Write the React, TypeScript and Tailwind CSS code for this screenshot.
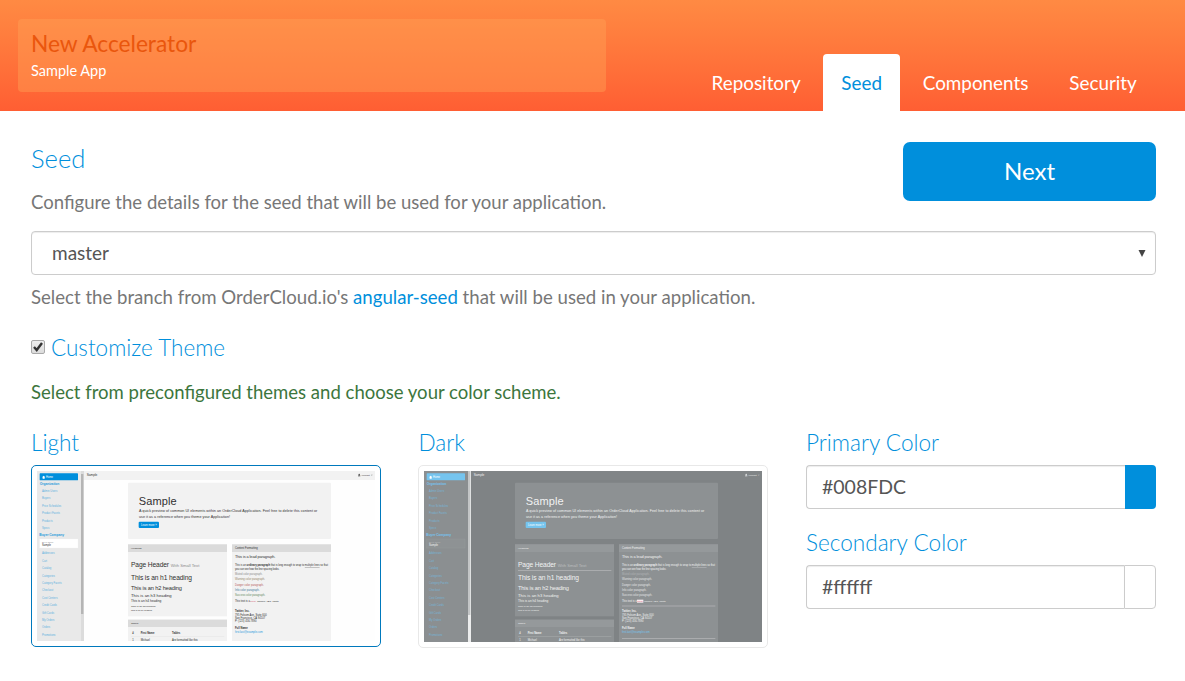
import type { ReactNode } from "react";

type Palette = {
  page: string;
  side: string;
  bar: string;
  panel: string;
  panelHead: string;
  text: string;
  muted: string;
  link: string;
  heading: string;
  button: string;
  current: string;
  currentBorder: string;
  track: string;
  thumb: string;
  rule: string;
  colors: string[];
};

const light: Palette = {
  page: "#fefefe",
  side: "#e9e9e9",
  bar: "#f2f2f2",
  panel: "#f2f2f2",
  panelHead: "#dbdbdb",
  text: "#303030",
  muted: "#8a8a8a",
  link: "#62b1e0",
  heading: "#2c9bdc",
  button: "#008fdc",
  current: "#ffffff",
  currentBorder: "#f4f4f4",
  track: "#dcdcdc",
  thumb: "#b5b5b5",
  rule: "#dcdcdc",
  colors: ["#8c8c8c", "#96866a", "#b8605e", "#44799b", "#64895f"],
};

const dark: Palette = {
  page: "#7f8385",
  side: "#8b8f91",
  bar: "#818587",
  panel: "#8d9193",
  panelHead: "#95999b",
  text: "#f1f2f2",
  muted: "#bcbebf",
  link: "#78b5d6",
  heading: "#76c3ec",
  button: "#75c4ee",
  current: "#8e9294",
  currentBorder: "#989c9e",
  track: "#eceded",
  thumb: "#c3c5c6",
  rule: "#b9bbbc",
  colors: ["#b0b3b4", "#e3e4e4", "#e3e4e4", "#e3e4e4", "#e3e4e4"],
};

const organization = ["Admin Users", "Buyers", "Price Schedules", "Product Facets", "Products", "Specs"];
const company = [
  "Addresses",
  "Cart",
  "Catalog",
  "Categories",
  "Category Facets",
  "Checkout",
  "Cost Centers",
  "Credit Cards",
  "Gift Cards",
  "My Orders",
  "Orders",
  "Promotions",
];
const samples = ["Muted", "Warning", "Danger", "Info", "Success"];

function ThemePreview({ c, isDark, height }: { c: Palette; isDark?: boolean; height: number }) {
  return (
    <svg
      viewBox={`36 33 1014 ${height * 3}`}
      width={338}
      height={height}
      className="block font-['Liberation_Sans',sans-serif]"
      fill={c.text}
    >
      <rect x="36" y="33" width="1014" height="520" fill={c.page} />
      <rect x="176" y="33" width="880" height="27" fill={c.bar} />
      <rect x="36" y="33" width="132" height="520" fill={c.side} />
      <rect x="168" y="33" width="9" height="520" fill={c.track} />
      <rect x="168" y={isDark ? 33 : 42} width="7" height={isDark ? 432 : 420} fill={c.thumb} />
      <rect x="44" y="40" width="115" height="21" rx="2" fill={c.button} />
      <path d="M51 52l5-5 5 5h-2v4h-6v-4z" fill="#fff" />
      <text x="63" y="54" fontSize="8" fill="#fff">Home</text>
      <text x="44" y="75" fontSize="10" fontWeight="700" fill={c.heading} textLength="59">Organization</text>
      {organization.map((name, i) => (
        <text key={name} x="51" y={96 + i * 22.2} fontSize="8" fill={c.link}>{name}</text>
      ))}
      <text x="43" y="229" fontSize="10" fontWeight="700" fill={c.heading} textLength="74">Buyer Company</text>
      <rect x="44" y="237" width="115" height="27" fill={c.current} stroke={c.currentBorder} />
      <text x="51" y="248" fontSize="6" fill={c.muted}>Buyer Scope</text>
      <text x="51" y="259" fontSize="8">Sample</text>
      {company.map((name, i) => (
        <text key={name} x="51" y={283 + i * 22.2} fontSize="8" fill={c.link}>{name}</text>
      ))}

      <text x="185" y="48" fontSize="9.5">Sample</text>
      <circle cx="1002.500" cy="43.500" r="2" />
      <path d="M999 49v-2q3.500-3 7 0v2z" />
      <text x="1007" y="48" fontSize="7.500">Account</text>
      <path d="M1038 44h5l-2.500 3z" fill={c.muted} />

      <rect x="309" y="68" width="609" height="169" rx="3" fill={c.panel} />
      <text x="341" y="134" fontSize="33" textLength="114">Sample</text>
      <text x="342" y="157" fontSize="11" textLength="535">
        A quick preview of common UI elements within an OrderCloud Application. Feel free to delete this content or
      </text>
      <text x="342" y="173" fontSize="11" textLength="273">
        use it as a reference when you theme your Application!
      </text>
      <rect x="341" y="185" width="61" height="19" rx="3" fill={c.button} />
      <text x="348" y="197" fontSize="8" fill="#fff">Learn more »</text>

      <rect x="309" y="253" width="297" height="216" fill={c.panel} />
      <rect x="309" y="253" width="297" height="23" fill={c.panelHead} />
      <text x="318" y="267" fontSize="7.500">Headings</text>
      <text x="318" y="321" fontSize="20" textLength="114">Page Header</text>
      <text x="437" y="321" fontSize="12.500" fill={c.muted} textLength="86">With Small Text</text>
      {isDark && <rect x="318" y="330" width="280" height="2" fill={c.rule} />}
      <text x="318" y="359" fontSize="20" textLength="183">This is an h1 heading</text>
      <text x="318" y="389" fontSize="17" textLength="153">This is an h2 heading</text>
      <text x="318" y="412" fontSize="12.500" textLength="122">This is an h3 heading</text>
      <text x="318" y="427" fontSize="9.500" textLength="91">This is an h4 heading</text>
      <text x="318" y="442" fontSize="7.500" textLength="73">This is an h5 heading</text>
      <text x="318" y="454" fontSize="6.500" textLength="63">This is an h6 heading</text>

      <rect x="309" y="479" width="297" height="74" fill={c.panel} />
      <rect x="309" y="479" width="297" height="22" fill={c.panelHead} />
      <text x="318" y="493" fontSize="7.500">Tables</text>
      <g fontSize="8" fontWeight="700">
        <text x="322" y="522">#</text>
        <text x="347" y="522">First Name</text>
        <text x="441" y="522">Tables</text>
      </g>
      <rect x="318" y="530" width="280" height="1" fill={c.rule} />
      <g fontSize="8">
        <text x="322" y="543">1</text>
        <text x="347" y="543">Michael</text>
        <text x="441" y="543">Are formatted like this</text>
      </g>

      <rect x="621" y="253" width="297" height="300" fill={c.panel} />
      <rect x="621" y="253" width="297" height="23" fill={c.panelHead} />
      <text x="630" y="267" fontSize="8">Content Formatting</text>
      <text x="630" y="295" fontSize="11.500" textLength="121">This is a lead paragraph.</text>
      <text x="630" y="319" fontSize="7.650">
        This is an <tspan fontWeight="700">ordinary paragraph</tspan> that is long enough to wrap to{" "}
        <tspan textDecoration="underline">multiple lines</tspan> so that
      </text>
      <text x="630" y="329" fontSize="8" textLength="133">you can see how the line spacing looks.</text>
      {samples.map((name, i) => (
        <text key={name} x="630" y={345 + i * 15.9} fontSize="8" fill={c.colors[i]}>{name} color paragraph.</text>
      ))}
      {isDark && <rect x="675" y="419" width="19" height="9" fill="#f9edf0" />}
      <text x="630" y="425" fontSize="8">This text is a</text>
      <text x="676" y="425" fontSize="7" fill="#d85b79">small</text>
      <text x="697" y="425" fontSize="7.500">sample ABC, right?</text>
      {isDark && <rect x="630" y="437" width="280" height="2" fill={c.rule} />}
      <g fontSize="8">
        <text x="630" y="457" fontWeight="700">Twitter, Inc.</text>
        <text x="630" y="467">795 Folsom Ave, Suite 600</text>
        <text x="630" y="477">San Francisco, CA 94107</text>
        <text x="630" y="487">P: (123) 456-7890</text>
        <text x="630" y="508" fontWeight="700">Full Name</text>
        <text x="630" y="519" fill={c.heading}>first.last@example.com</text>
      </g>
      {isDark && <rect x="630" y="534" width="280" height="2" fill={c.rule} />}
    </svg>
  );
}

function Tab({ children, active }: { children: ReactNode; active?: boolean }) {
  return (
    <a
      className={
        active
          ? "flex h-[57px] items-center rounded-t-[4px] bg-white px-[18.250px] pt-0.5 text-[#008fdc]"
          : "flex h-[57px] items-center px-[18.500px] pt-0.5 text-white"
      }
    >
      {children}
    </a>
  );
}

function ColorField({ label, value, swatch }: { label: string; value: string; swatch: string }) {
  return (
    <div>
      <h4 className="h-[35px] text-[22.600px] leading-[26px] font-light text-[#008fdc]">{label}</h4>
      <div className="flex h-[44px]">
        <div className="flex flex-1 items-center rounded-l-[4px] border border-r-0 border-[#ccc] pl-[15px] text-[19.500px] text-[#555] shadow-[inset_0_1px_1px_rgba(0,0,0,0.075)]">
          {value}
        </div>
        <div className={swatch} />
      </div>
    </div>
  );
}

export default function App() {
  return (
    <div className="h-[681px] w-[1185px] overflow-hidden bg-white font-['Lato',sans-serif] text-[18.550px] whitespace-nowrap text-[#777]">
      <header className="flex h-[111px] items-end justify-between bg-linear-to-b from-[#ff8a43] to-[#ff5e33] pr-[29.700px] pl-[18px]">
        <div className="mb-[19px] h-[73px] w-[588px] rounded-[4px] bg-[#ffa054]/45 pt-[10px] pl-[13px]">
          <h1 className="text-[22.700px] leading-[30px] text-[#ea560d]">New Accelerator</h1>
          <p className="text-[14.500px] leading-[24px] text-white">Sample App</p>
        </div>
        <nav className="flex gap-[4px] text-[18.850px]">
          <Tab>Repository</Tab>
          <Tab active>Seed</Tab>
          <Tab>Components</Tab>
          <Tab>Security</Tab>
        </nav>
      </header>

      <main className="pt-[31px] pr-[29px] pl-[31px]">
        <div className="flex h-[89px] justify-between">
          <div>
            <h2 className="text-[25.600px] leading-[32px] font-light text-[#008fdc]">Seed</h2>
            <p className="mt-[14px] leading-[28px]">
              Configure the details for the seed that will be used for your application.
            </p>
          </div>
          <button className="h-[59px] w-[253px] rounded-[7px] bg-[#008fdc] pb-[2px] text-[24px] text-white">Next</button>
        </div>

        <div className="flex h-[44px] items-center justify-between rounded-[4px] border border-[#ccc] pr-[9px] pl-[20px] text-[19px] text-[#555] shadow-[inset_0_1px_1px_rgba(0,0,0,0.075)]">
          <span>master</span>
          <svg width="8" height="7" viewBox="0 0 8 7" fill="#444">
            <path d="M.5 0h7L4 7z" />
          </svg>
        </div>
        <p className="mt-[8px] text-[18.620px] leading-[28px]">
          Select the branch from OrderCloud.io's <a className="text-[#008fdc]">angular-seed</a> that will be used in your
          application.
        </p>

        <div className="mt-[22px] flex h-[28px] items-center">
          <span className="mr-[6px] flex h-[14px] w-[14px] items-center justify-center rounded-[2px] border border-[#a9a9a9] bg-linear-to-b from-[#eee] to-[#dcdcdc]">
            <svg width="12" height="12" viewBox="0 0 12 12" fill="none" stroke="#333" strokeWidth="2.400">
              <path d="M2 6l2.700 3L10 2" />
            </svg>
          </span>
          <h3 className="pt-[2px] text-[22.500px] leading-[28px] font-light text-[#008fdc]">Customize Theme</h3>
        </div>
        <p className="mt-[17px] leading-[28px] text-[#3c763d]">
          Select from preconfigured themes and choose your color scheme.
        </p>

        <div className="mt-[24px] grid grid-cols-[350px_350px_350px] justify-between">
          <div>
            <h4 className="h-[35px] text-[22.600px] leading-[26px] font-light text-[#008fdc]">Light</h4>
            <div className="rounded-[5px] border border-[#0079bd] p-[5px]">
              <ThemePreview c={light} height={170} />
            </div>
          </div>
          <div className="-ml-px">
            <h4 className="h-[35px] pl-px text-[22.600px] leading-[26px] font-light text-[#008fdc]">Dark</h4>
            <div className="w-[350px] rounded-[5px] border border-[#e8e8e8] p-[5px]">
              <ThemePreview c={dark} isDark height={171} />
            </div>
          </div>
          <div className="flex flex-col gap-[21px]">
            <ColorField label="Primary Color" value="#008FDC" swatch="w-[31px] rounded-r-[4px] bg-[#008fdc]" />
            <ColorField
              label="Secondary Color"
              value="#ffffff"
              swatch="w-[32px] rounded-r-[4px] border border-[#ccc] bg-white"
            />
          </div>
        </div>
      </main>
    </div>
  );
}
